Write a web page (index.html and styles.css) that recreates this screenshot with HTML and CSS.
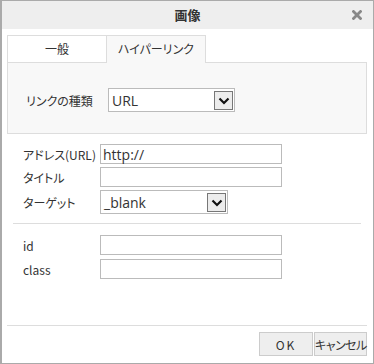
FILE: index.html
```html
<!DOCTYPE html>
<html lang="ja">

<head>
    <meta charset="UTF-8">
    <meta name="viewport" content="width=device-width, initial-scale=1.0">
    <title>画像</title>
    <link rel="stylesheet" href="styles.css">
</head>

<body>
    <div class="dialog">
        <div class="titlebar">
            <span></span>
            <span class="title">画像</span>
            <span class="close">
                <svg width="10" height="10" viewBox="0 0 10 10">
                    <path d="M1.5 1.5 L8.5 8.5 M8.5 1.5 L1.5 8.5" stroke="#888" stroke-width="2.8" stroke-linecap="square" />
                </svg>
            </span>
        </div>

        <div class="content">
            <div class="tabs">
                <div class="tab">一般</div>
                <div class="tab active">ハイパーリンク</div>
                <div class="tab-fill"></div>
            </div>

            <div class="panel">
                <div class="row">
                    <label class="panel-label">リンクの種類</label>
                    <div class="select select-type">
                        <span class="select-value">URL</span>
                        <span class="select-btn">
                            <svg width="12" height="8" viewBox="0 0 12 8">
                                <path d="M1.5 1.5 L6 6 L10.5 1.5" fill="none" stroke="#111" stroke-width="2.2" />
                            </svg>
                        </span>
                    </div>
                </div>
            </div>

            <div class="fields">
                <div class="field">
                    <label>アドレス(URL)</label>
                    <div class="input"><span class="input-value">http://</span></div>
                </div>
                <div class="field">
                    <label>タイトル</label>
                    <div class="input"></div>
                </div>
                <div class="field">
                    <label>ターゲット</label>
                    <div class="select select-target">
                        <span class="select-value">_blank</span>
                        <span class="select-btn">
                            <svg width="12" height="8" viewBox="0 0 12 8">
                                <path d="M1.5 1.5 L6 6 L10.5 1.5" fill="none" stroke="#111" stroke-width="2.2" />
                            </svg>
                        </span>
                    </div>
                </div>
            </div>

            <hr class="divider">

            <div class="fields fields-attr">
                <div class="field">
                    <label>id</label>
                    <div class="input"></div>
                </div>
                <div class="field">
                    <label>class</label>
                    <div class="input"></div>
                </div>
            </div>
        </div>

        <div class="footer">
            <button class="btn btn-ok">OK</button>
            <button class="btn btn-cancel">キャンセル</button>
        </div>
    </div>
</body>

</html>
```

FILE: styles.css
```css
/* Global */
body {
    margin: 0;
    font-family: "Noto Sans CJK JP", "Liberation Sans", sans-serif;
    font-size: 12px;
    font-feature-settings: "palt";
    color: #333;
    background: #fff;
}

.dialog {
    width: 374px;
    height: 364px;
    box-sizing: border-box;
    border: 1px solid #aaa;
    border-left-width: 2px;
    display: flex;
    flex-direction: column;
}

/* Title bar */
.titlebar {
    height: 28px;
    flex-shrink: 0;
    background-color: #eee;
    display: grid;
    grid-template-columns: 1fr auto 1fr;
    align-items: center;
}

.title {
    font-weight: bold;
    font-size: 13px;
    color: #333;
    line-height: 28px;
}

.close {
    justify-self: end;
    margin-right: 11px;
    display: flex;
}

/* Tabs */
.content {
    flex: 1;
    padding: 6px 6px 0 5px;
    display: flex;
    flex-direction: column;
}

.tabs {
    display: flex;
    height: 28px;
}

.tab {
    box-sizing: border-box;
    height: 28px;
    text-align: center;
    line-height: 26px;
    color: #333;
    white-space: nowrap;
    border-top: 1px solid #ddd;
}

.tab:first-child {
    width: 100px;
    background-color: #fff;
    border-left: 1px solid #ddd;
    border-right: 1px solid #ddd;
    border-bottom: 1px solid #ddd;
}

.tab.active {
    width: 99px;
    background-color: #f8f8f8;
    border-right: 1px solid #ddd;
}

.tab-fill {
    flex: 1;
    border-bottom: 1px solid #ddd;
}

.panel {
    background-color: #f8f8f8;
    border: 1px solid #ddd;
    border-top: none;
    padding: 25px 0 21px 18px;
}

.row {
    display: flex;
    align-items: center;
}

.panel-label {
    width: 82px;
    flex-shrink: 0;
    white-space: nowrap;
}

/* Selects */
.select {
    box-sizing: border-box;
    height: 24px;
    background-color: #fff;
    border: 1px solid #bbb;
    display: flex;
    align-items: center;
    justify-content: space-between;
    padding: 0 0 0 3px;
}

.select-type {
    width: 127px;
}

.select-target {
    width: 128px;
}

.select-value {
    font-family: "Open Sans", "Noto Sans", sans-serif;
    font-size: 14px;
    color: #333;
}

.select-btn {
    box-sizing: border-box;
    width: 19px;
    height: 19px;
    margin-right: 1px;
    margin-top: 1px;
    border: 1px solid #777;
    background-color: #ececec;
    display: flex;
    align-items: center;
    justify-content: center;
}

/* Fields */
.fields {
    display: flex;
    flex-direction: column;
    gap: 3px;
    padding: 10px 0 0 16px;
}

.field {
    display: flex;
    align-items: center;
}

.field label {
    width: 77px;
    flex-shrink: 0;
    white-space: nowrap;
}

.input {
    box-sizing: border-box;
    width: 182px;
    height: 20px;
    border: 1px solid #bbb;
    background-color: #fff;
    display: flex;
    align-items: center;
    padding-left: 2px;
}

.input-value {
    font-family: "Open Sans", "Noto Sans", sans-serif;
    font-size: 14px;
    color: #333;
}

.divider {
    border: none;
    border-top: 1px solid #ddd;
    margin: 9px 6px 0 6px;
}

.fields-attr {
    gap: 4px;
    padding-top: 11px;
}

/* Footer */
.footer {
    margin: 0 6px 0 5px;
    border-top: 1px solid #ddd;
    padding: 6px 0 7px;
    display: flex;
    justify-content: flex-end;
    gap: 1px;
}

.btn {
    box-sizing: border-box;
    height: 24px;
    border: 1px solid #ccc;
    background-color: #eee;
    color: #333;
    font-family: "Noto Sans CJK JP", sans-serif;
    font-size: 12px;
    font-feature-settings: "palt";
    white-space: nowrap;
    padding: 0;
    cursor: pointer;
}

.btn-ok {
    width: 54px;
    letter-spacing: 2px;
}

.btn-cancel {
    width: 53px;
    letter-spacing: -0.5px;
}
```
